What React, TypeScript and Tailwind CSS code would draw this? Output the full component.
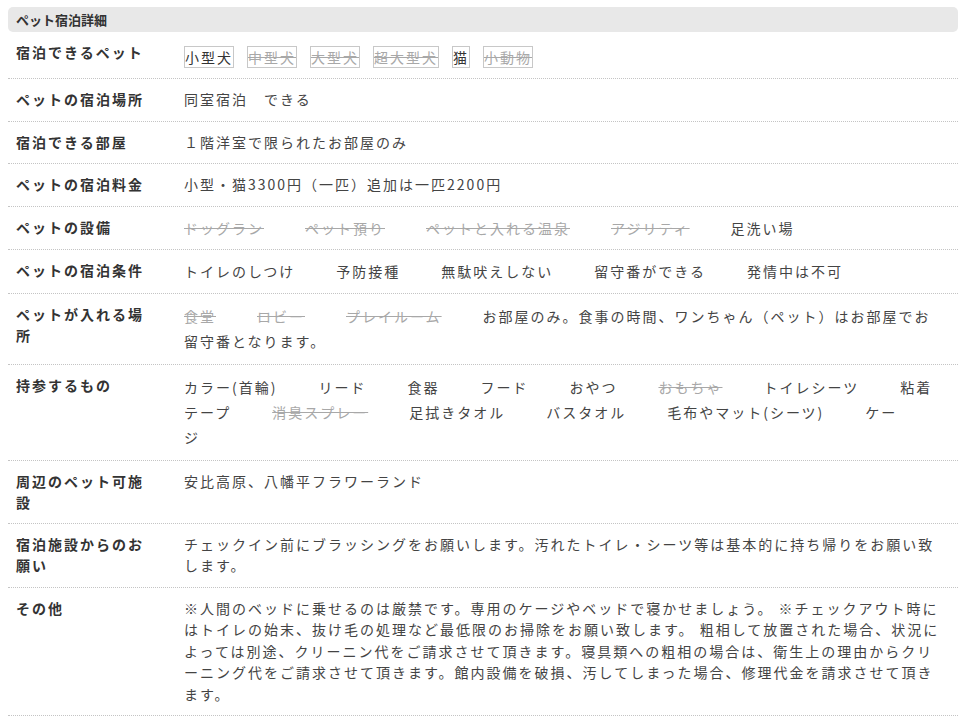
import React from "react";

type Item = { t: string; off?: boolean };

const font = { fontFamily: '"Noto Sans CJK JP", "Noto Sans", sans-serif' };

function Row({
  label,
  children,
  lead = "leading-[21.5px]",
}: {
  label: string;
  children: React.ReactNode;
  lead?: string;
}) {
  return (
    <div className="flex px-[8px] py-[10px] border-b border-dotted border-[#c4c4c4]">
      <div className="w-[168px] shrink-0 pr-[30px] font-bold text-[#333] leading-[21px]">
        {label}
      </div>
      <div className={`w-[762px] text-[#444] ${lead}`}>{children}</div>
    </div>
  );
}

function Items({ items }: { items: Item[] }) {
  return (
    <>
      {items.map((it, i) => (
        <span
          key={i}
          className={
            it.off
              ? "mr-[41px] text-[#a8a8a8] line-through decoration-[#a8a8a8]"
              : "mr-[41px]"
          }
        >
          {it.t}
        </span>
      ))}
    </>
  );
}

const pets: Item[] = [
  { t: "小型犬" },
  { t: "中型犬", off: true },
  { t: "大型犬", off: true },
  { t: "超大型犬", off: true },
  { t: "猫" },
  { t: "小動物", off: true },
];

export default function App() {
  return (
    <div style={font} className="bg-white min-h-screen pt-[7px]">
      <div className="ml-[8px] w-[950px] text-[14px] tracking-[2px]">
        <div className="h-[25px] rounded-[5px] bg-[#e8e8e8] px-[8px] text-[13px] tracking-normal font-bold text-[#333] leading-[25px]">
          ペット宿泊詳細
        </div>

        <Row label="宿泊できるペット" lead="leading-[26px]">
          {pets.map((p, i) => (
            <span
              key={i}
              className={
                p.off
                  ? "inline-block align-middle mr-[13px] border border-[#c8c8c8] leading-[20px] text-[#a8a8a8] line-through decoration-[#a8a8a8]"
                  : "inline-block align-middle mr-[13px] border border-[#c8c8c8] leading-[20px] text-[#333]"
              }
            >
              {p.t}
            </span>
          ))}
        </Row>

        <Row label="ペットの宿泊場所">同室宿泊　できる</Row>

        <Row label="宿泊できる部屋">１階洋室で限られたお部屋のみ</Row>

        <Row label="ペットの宿泊料金">小型・猫3300円（一匹）追加は一匹2200円</Row>

        <Row label="ペットの設備" lead="leading-[22px]">
          <Items
            items={[
              { t: "ドッグラン", off: true },
              { t: "ペット預り", off: true },
              { t: "ペットと入れる温泉", off: true },
              { t: "アジリティ", off: true },
              { t: "足洗い場" },
            ]}
          />
        </Row>

        <Row label="ペットの宿泊条件" lead="leading-[23px]">
          <Items
            items={[
              { t: "トイレのしつけ" },
              { t: "予防接種" },
              { t: "無駄吠えしない" },
              { t: "留守番ができる" },
              { t: "発情中は不可" },
            ]}
          />
        </Row>

        <Row label="ペットが入れる場所" lead="leading-[25px]">
          <Items
            items={[
              { t: "食堂", off: true },
              { t: "ロビー", off: true },
              { t: "プレイルーム", off: true },
            ]}
          />
          お部屋のみ。食事の時間、ワンちゃん（ペット）はお部屋でお留守番となります。
        </Row>

        <Row label="持参するもの" lead="leading-[25px]">
          <Items
            items={[
              { t: "カラー(首輪)" },
              { t: "リード" },
              { t: "食器" },
              { t: "フード" },
              { t: "おやつ" },
              { t: "おもちゃ", off: true },
              { t: "トイレシーツ" },
              { t: "粘着テープ" },
              { t: "消臭スプレー", off: true },
              { t: "足拭きタオル" },
              { t: "バスタオル" },
              { t: "毛布やマット(シーツ)" },
              { t: "ケージ" },
            ]}
          />
        </Row>

        <Row label="周辺のペット可施設">安比高原、八幡平フラワーランド</Row>

        <Row label="宿泊施設からのお願い">
          チェックイン前にブラッシングをお願いします。汚れたトイレ・シーツ等は基本的に持ち帰りをお願い致します。
        </Row>

        <Row label="その他">
          ※人間のベッドに乗せるのは厳禁です。専用のケージやベッドで寝かせましょう。 ※チェックアウト時にはトイレの始末、抜け毛の処理など最低限のお掃除をお願い致します。 粗相して放置された場合、状況によっては別途、クリーニン代をご請求させて頂きます。寝具類への粗相の場合は、衛生上の理由からクリーニング代をご請求させて頂きます。館内設備を破損、汚してしまった場合、修理代金を請求させて頂きます。
        </Row>
      </div>
    </div>
  );
}
